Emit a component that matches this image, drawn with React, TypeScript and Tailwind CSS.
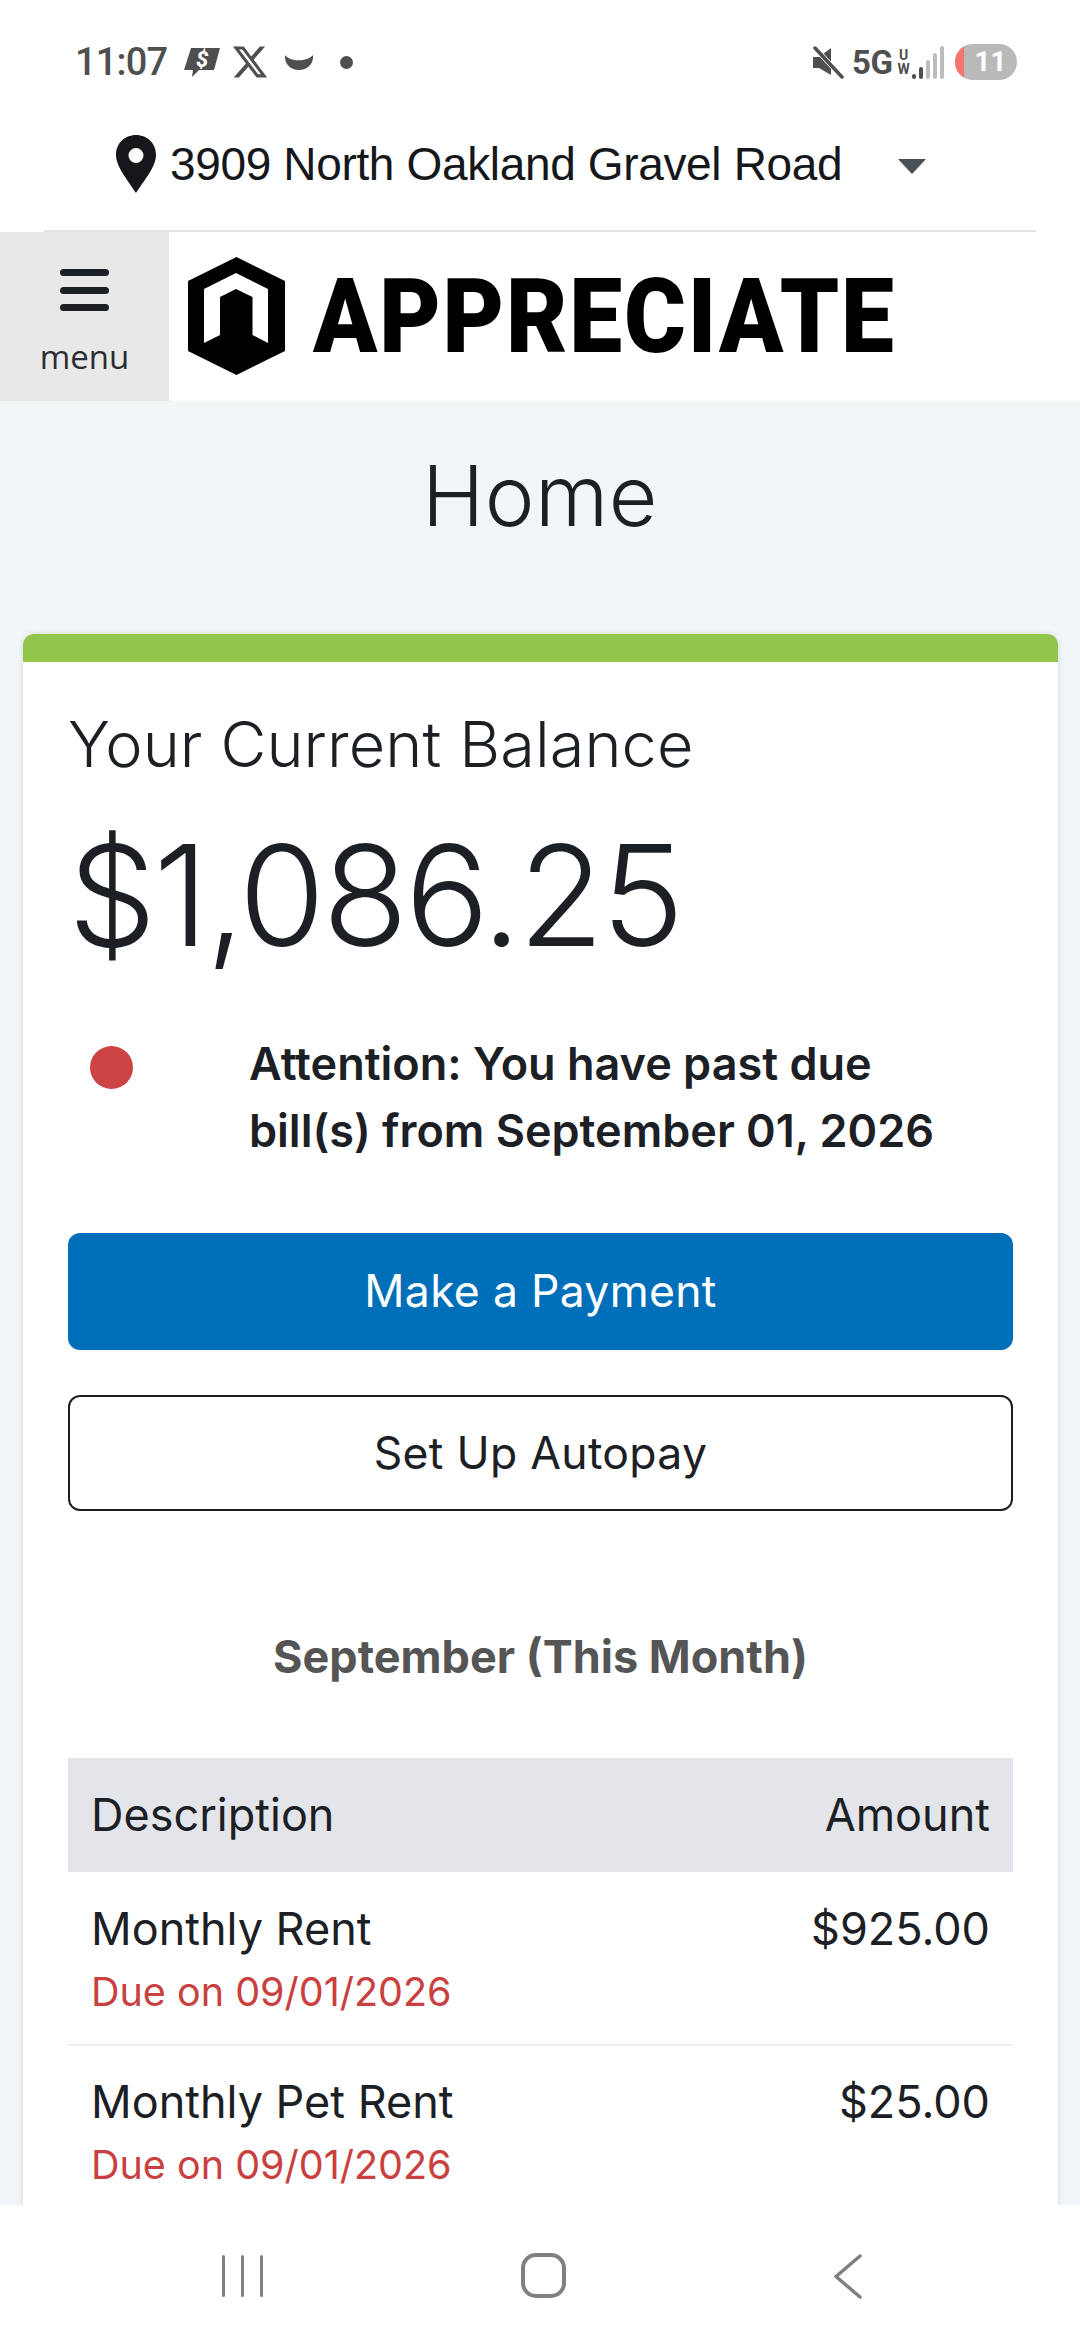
export default function App() {
    return (
        <div className="w-[1080px] h-[2340px] overflow-hidden flex flex-col bg-[#f1f6f9] font-['Inter',sans-serif] text-[#1c2025]">
            {/* Phone status bar */}
            <div className="h-[124px] shrink-0 bg-white flex items-start justify-between pt-[44px] pl-[75px] pr-[63px] text-[#4f4f4f]">
                <div className="flex items-center h-[36px]">
                    <span className="font-['Roboto',sans-serif] font-medium text-[38px] tracking-[-0.8px] w-[109px]">11:07</span>
                    <svg className="w-[36px] h-[30px]" viewBox="0 0 36 30">
                        <path d="M7 1h29l-6 22H15l-7 7 1-7H0z" fill="#4f4f4f" />
                        <text x="12" y="20" fontSize="22" fontWeight="800" fontStyle="italic" fill="#fff" fontFamily="Roboto">$</text>
                    </svg>
                    <svg className="w-[38px] h-[38px] ml-[11px]" viewBox="0 0 24 24" fill="#4f4f4f">
                        <path d="M18.244 2.25h3.308l-7.227 8.26 8.502 11.24H16.17l-5.214-6.817L4.99 21.75H1.68l7.73-8.835L1.254 2.25H8.08l4.713 6.231zm-1.161 17.52h1.833L7.084 4.126H5.117z" />
                    </svg>
                    <svg className="w-[30px] h-[18px] ml-[15px]" viewBox="0 0 30 18" fill="#4f4f4f">
                        <path d="M1 2c5 7 22 7 28 0 1 9-6 15-14 15S0 11 1 2z" />
                    </svg>
                    <span className="w-[13px] h-[13px] rounded-full bg-[#4f4f4f] ml-[26px]" />
                </div>
                <div className="flex items-center h-[36px]">
                    <svg className="w-[32px] h-[33px]" viewBox="0 0 32 33" fill="#4f4f4f">
                        <path d="M1 11h6l12-9v27L7 22H1z" />
                        <path d="M3 2l27 29" stroke="#fff" strokeWidth="5" />
                        <path d="M3 2l27 29" stroke="#4f4f4f" strokeWidth="3.5" strokeLinecap="round" />
                    </svg>
                    <span className="font-['Roboto',sans-serif] font-bold text-[33px] leading-none ml-[8px] w-[44px] tracking-[-0.5px]">5G</span>
                    <span className="flex flex-col font-['Roboto',sans-serif] font-bold text-[14px] leading-[14px] w-[15px] items-center">
                        <span>U</span>
                        <span>W</span>
                    </span>
                    <div className="flex items-end gap-[3px] h-[33px] ml-[1px] mr-[11px]">
                        <span className="w-[4px] h-[5px] rounded-full bg-[#4f4f4f]" />
                        <span className="w-[4px] h-[12px] rounded-full bg-[#4f4f4f]" />
                        <span className="w-[4px] h-[19px] rounded-full bg-[#bdbdbd]" />
                        <span className="w-[4px] h-[26px] rounded-full bg-[#bdbdbd]" />
                        <span className="w-[4px] h-[33px] rounded-full bg-[#bdbdbd]" />
                    </div>
                    <div className="w-[62px] h-[36px] rounded-full overflow-hidden flex bg-[#b9b9b9]">
                        <span className="w-[9px] bg-[#f5756c]" />
                        <span className="flex-1 text-center text-white font-['Roboto',sans-serif] font-bold text-[28px] leading-[36px]">11</span>
                    </div>
                </div>
            </div>

            {/* Property selector */}
            <div className="h-[108px] shrink-0 bg-white px-[44px]">
                <div className="h-full border-b-2 border-[#e3e3e3] flex items-start pt-[11px] pl-[71px]">
                    <svg className="w-[42px] h-[58px] mr-[13px]" viewBox="0 0 42 58">
                        <path fillRule="evenodd" fill="#15171a" d="M21 0C9 0 1 9 1 20c0 12 13 27 20 38 7-11 20-26 20-38C41 9 33 0 21 0zm0 13a7.500 7.500 0 1 1 0 15 7.500 7.500 0 0 1 0-15z" />
                    </svg>
                    <span className="font-['Liberation_Sans',sans-serif] text-[46px] tracking-[-0.35px] leading-[58px] w-[725px] whitespace-nowrap text-[#15171a]">3909 North Oakland Gravel Road</span>
                    <span className="mt-[24px] ml-[3px] border-x-[14px] border-t-[15px] border-x-transparent border-t-[#495057]" />
                </div>
            </div>

            {/* Header */}
            <div className="h-[169px] shrink-0 bg-white flex items-stretch">
                <div className="w-[169px] bg-[#e8e8e8] flex flex-col items-center pt-[37px]">
                    <div className="flex flex-col gap-[10.500px]">
                        <span className="block w-[49px] h-[7px] rounded-full bg-[#1c2025]" />
                        <span className="block w-[49px] h-[7px] rounded-full bg-[#1c2025]" />
                        <span className="block w-[49px] h-[7px] rounded-full bg-[#1c2025]" />
                    </div>
                    <span className="mt-[24px] text-[33px] leading-[44px] font-['Open_Sans',sans-serif] text-[#2a2d31]">menu</span>
                </div>
                <div className="flex items-center ml-[19px] pb-[1px]">
                    <svg className="w-[97px] h-[118px]" viewBox="0 0 97 118">
                        <path d="M48.500 0L97 24v70l-48.500 24L0 94V24z" fill="#000" />
                        <path d="M16 86V32l32-16 32 16v54l-15.500-8V40L48 32l-16 8v38z" fill="#fff" />
                    </svg>
                    <span className="ml-[28px] w-[579px] whitespace-nowrap font-['Roboto',sans-serif] font-black text-[103px] leading-none tracking-[2px] origin-left scale-x-[0.917] text-black">APPRECIATE</span>
                </div>
            </div>

            {/* Page body */}
            <div className="flex-1 min-h-0 overflow-hidden">
                <h1 className="text-center font-light text-[84px] leading-[100px] mt-[45px] tracking-[0.5px]">Home</h1>

                <div className="ml-[23px] mr-[22px] mt-[88px] h-[1700px] rounded-t-[11px] overflow-hidden bg-white shadow-[0_0_6px_rgba(0,0,0,0.12)]">
                    <div className="h-[28px] bg-[#93c54b]" />
                    <div className="px-[45px]">
                        <p className="mt-[46px] font-light text-[63px] leading-[72px] tracking-[0.1px]">Your Current Balance</p>
                        <p className="mt-[35px] font-light text-[140px] leading-[160px] tracking-[-2.9px] whitespace-nowrap">$1,086.25</p>

                        <div className="flex items-start mt-[55px]">
                            <span className="mt-[16px] ml-[22px] w-[43px] h-[43px] rounded-full bg-[#cc4444] shrink-0" />
                            <p className="ml-[116px] font-semibold text-[45px] leading-[67px] whitespace-nowrap">
                                Attention: You have past due
                                <br />
                                bill(s) from September 01, 2026
                            </p>
                        </div>

                        <button className="block w-full h-[117px] mt-[69px] rounded-[12px] bg-[#006fba] text-white text-[44.500px] tracking-[0.3px]">Make a Payment</button>
                        <button className="block w-full h-[116px] mt-[45px] rounded-[12px] border-2 border-[#1c2025] bg-white text-[44.500px] tracking-[0.3px]">Set Up Autopay</button>

                        <p className="mt-[118px] text-center font-bold text-[45px] leading-[56px] text-[#555555]">September (This Month)</p>

                        <div className="mt-[73px]">
                            <div className="h-[114px] bg-[#e4e5ea] px-[23px] flex items-center justify-between text-[45px]">
                                <span>Description</span>
                                <span>Amount</span>
                            </div>
                            <div className="h-[174px] border-b-2 border-[#eeeeee] px-[23px] pt-[29px] flex justify-between">
                                <div>
                                    <p className="text-[45px] leading-[56px]">Monthly Rent</p>
                                    <p className="text-[39.500px] leading-[50px] mt-[10px] text-[#c94040]">Due on 09/01/2026</p>
                                </div>
                                <span className="text-[45px] leading-[56px]">$925.00</span>
                            </div>
                            <div className="h-[174px] px-[23px] pt-[28px] flex justify-between">
                                <div>
                                    <p className="text-[45px] leading-[56px]">Monthly Pet Rent</p>
                                    <p className="text-[39.500px] leading-[50px] mt-[10px] text-[#c94040]">Due on 09/01/2026</p>
                                </div>
                                <span className="text-[45px] leading-[56px]">$25.00</span>
                            </div>
                        </div>
                    </div>
                </div>
            </div>

            {/* Android nav bar */}
            <div className="h-[135px] shrink-0 bg-white relative flex items-start pt-[50px] pl-[222px]">
                <div className="flex gap-[16px]">
                    <span className="w-[3px] h-[42px] rounded-full bg-[#808080]" />
                    <span className="w-[3px] h-[42px] rounded-full bg-[#808080]" />
                    <span className="w-[3px] h-[42px] rounded-full bg-[#808080]" />
                </div>
                <span className="ml-[258px] -mt-[2px] w-[45px] h-[45px] rounded-[15px] border-[4px] border-[#808080]" />
                <svg className="ml-[267px] -mt-[1px] w-[30px] h-[45px]" viewBox="0 0 30 45" fill="none">
                    <path d="M27 2L3 22.500 27 43" stroke="#808080" strokeWidth="3.500" strokeLinecap="round" strokeLinejoin="round" />
                </svg>
            </div>
        </div>
    );
}
